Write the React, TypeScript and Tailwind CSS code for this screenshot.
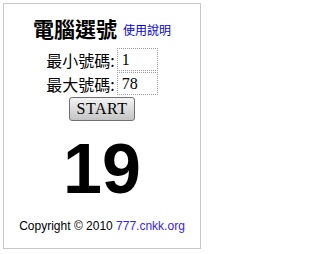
import React, { useState } from 'react';

const cjk = '"Noto Sans CJK TC", "Noto Sans CJK SC", sans-serif';

const App: React.FC = () => {
  const [min, setMin] = useState('1');
  const [max, setMax] = useState('78');
  const [result, setResult] = useState(19);

  const handleStart = () => {
    const lo = parseInt(min, 10) || 1;
    const hi = parseInt(max, 10) || lo;
    setResult(lo + Math.floor(Math.random() * (hi - lo + 1)));
  };

  return (
    <div className="w-[206px] h-[254px] bg-white pt-[3px] pl-[3px]">
      <div className="w-[198px] h-[246px] border border-[#c8c8c8] flex flex-col items-center">
        {/* Title */}
        <div className="flex items-end gap-[6px] mt-[10px] h-[28px]">
          <span className="text-[21px] leading-[28px] font-bold text-black" style={{ fontFamily: cjk }}>
            電腦選號
          </span>
          <a href="#" className="text-[12px] leading-[24px] text-[#0000ee]" style={{ fontFamily: cjk }}>
            使用說明
          </a>
        </div>

        {/* Range inputs */}
        <div className="mt-[6px] flex flex-col items-end gap-[1px]">
          <label className="flex items-center gap-[2px]">
            <span className="text-[16px] leading-none text-black" style={{ fontFamily: cjk }}>最小號碼:</span>
            <input
              value={min}
              onChange={(e) => setMin(e.target.value)}
              className="w-[41px] h-[23px] border border-dotted border-[#9a9ab8] px-[4px] text-[16px] outline-none font-['Liberation_Serif',serif]"
            />
          </label>
          <label className="flex items-center gap-[2px]">
            <span className="text-[16px] leading-none text-black" style={{ fontFamily: cjk }}>最大號碼:</span>
            <input
              value={max}
              onChange={(e) => setMax(e.target.value)}
              className="w-[41px] h-[23px] border border-dotted border-[#9a9ab8] px-[4px] text-[16px] outline-none font-['Liberation_Serif',serif]"
            />
          </label>
        </div>

        <button
          onClick={handleStart}
          className="mt-[2px] w-[66px] h-[24px] rounded-[3px] border border-[#707070] bg-gradient-to-b from-[#f4f4f4] to-[#c4c4c4] text-[16px] leading-none text-black font-['Liberation_Serif',serif] tracking-[0.5px]"
        >
          START
        </button>

        {/* Result */}
        <div className="mt-[14px] h-[68px] flex items-center text-[70px] leading-none font-bold text-black font-['Liberation_Sans',Arial,sans-serif]">
          {result}
        </div>

        <p className="mt-[16px] text-[12px] leading-[14px] text-black font-['Liberation_Sans',Arial,sans-serif]">
          Copyright © 2010 <a href="#" className="text-[#3322ff]">777.cnkk.org</a>
        </p>
      </div>
    </div>
  );
};

export default App;
